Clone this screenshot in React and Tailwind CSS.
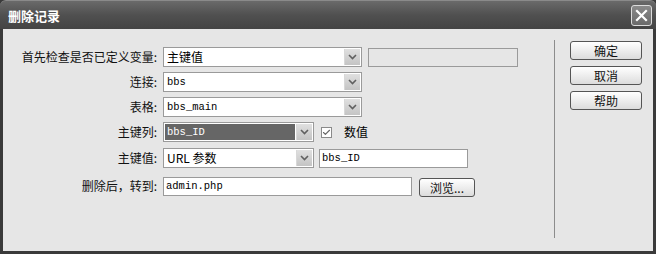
import { Check } from "lucide-react";

const cjk = { fontFamily: '"Noto Sans CJK SC", "Noto Sans", sans-serif' };
const mono = { fontFamily: '"Liberation Mono", "Noto Sans CJK SC", monospace' };

const Arrow = () => (
	<div className="absolute right-[1px] top-[1px] bottom-[1px] w-[16px] flex items-center justify-center bg-gradient-to-b from-[#e0e0e0] to-[#c4c4c4] border-l border-[#d8d8d8]">
		<svg width="9" height="6" viewBox="0 0 9 6">
			<path d="M1 1 L4.5 4.5 L8 1" fill="none" stroke="#606060" strokeWidth="1.6" />
		</svg>
	</div>
);

const Select = ({ value, width, selected, monoText }) => (
	<div
		className="relative h-[20px] border border-[#9a9a9a] bg-white flex items-center"
		style={{ width }}
	>
		<div
			className={
				"h-[16px] ml-[1px] pl-[2px] flex items-center text-[12px] leading-none " +
				(selected ? "bg-[#666666] text-white w-[130px]" : "text-black")
			}
			style={monoText ? { ...mono, fontSize: 10.5 } : cjk}
		>
			{value}
		</div>
		<Arrow />
	</div>
);

const Row = ({ label, children, className = "" }) => (
	<div className={"flex items-center " + className}>
		<div className="w-[157px] pr-[3px] text-right text-[12px] leading-none text-[#111]" style={cjk}>
			{label}
		</div>
		<div className="ml-[3px] flex items-center">{children}</div>
	</div>
);

const Button = ({ children, className = "" }) => (
	<div
		className={
			"h-[19px] flex items-center justify-center rounded-[3px] border border-[#555] bg-gradient-to-b from-white to-[#dcdcdc] text-[12px] leading-none text-[#111] " +
			className
		}
		style={cjk}
	>
		{children}
	</div>
);

export default function App() {
	return (
		<div className="w-[656px] h-[254px] bg-[#3a3a3a] flex flex-col overflow-hidden">
			<div className="h-[29px] shrink-0 rounded-t-[6px] bg-gradient-to-b from-[#6a6a6a] via-[#505050] to-[#444444] border-t border-[#8a8a8a] flex items-center justify-between pl-[8px] pr-[4px]">
				<div className="text-white font-bold text-[13px] leading-none" style={cjk}>
					删除记录
				</div>
				<div className="w-[21px] h-[21px] rounded-[3px] border border-[#dcdcdc] bg-gradient-to-b from-[#8a8a8a] to-[#6a6a6a] flex items-center justify-center">
					<svg width="13" height="13" viewBox="0 0 13 13">
						<path d="M2 2 L11 11 M11 2 L2 11" stroke="white" strokeWidth="2.2" strokeLinecap="square" />
					</svg>
				</div>
			</div>
			<div className="flex-1 mx-[3px] mb-[3px] bg-[#e6e6e6] flex">
				<div className="w-[551px] pt-[18px] flex flex-col">
					<Row label="首先检查是否已定义变量:">
						<Select value="主键值" width={199} />
						<div className="ml-[6px] w-[150px] h-[19px] border border-[#9a9a9a] bg-[#e6e6e6]" />
					</Row>
					<Row label="连接:" className="mt-[5px]">
						<Select value="bbs" width={199} monoText />
					</Row>
					<Row label="表格:" className="mt-[5px]">
						<Select value="bbs_main" width={199} monoText />
					</Row>
					<Row label="主键列:" className="mt-[5px]">
						<Select value="bbs_ID" width={151} monoText selected />
						<div className="ml-[7px] w-[11px] h-[11px] border border-[#8a8a8a] bg-white flex items-center justify-center">
							<Check size={9} strokeWidth={3} color="#666" />
						</div>
						<div className="ml-[12px] text-[12px] leading-none" style={cjk}>
							数值
						</div>
					</Row>
					<Row label="主键值:" className="mt-[6px]">
						<Select value="URL 参数" width={151} />
						<div
							className="ml-[5px] w-[149px] h-[19px] border border-[#9a9a9a] bg-white flex items-center pl-[2px] text-[10.5px] leading-none"
							style={mono}
						>
							bbs_ID
						</div>
					</Row>
					<Row label="删除后，转到:" className="mt-[7px]">
						<div
							className="w-[249px] h-[19px] border border-[#9a9a9a] bg-white flex items-center pl-[2px] text-[10.5px] leading-none"
							style={mono}
						>
							admin.php
						</div>
						<Button className="ml-[7px] w-[56px] mt-[3px]">浏览...</Button>
					</Row>
				</div>
				<div className="mt-[11px] mb-[13px] w-[1px] bg-[#8c8c8c]" />
				<div className="ml-[15px] pt-[12px] flex flex-col gap-[6px]">
					<Button className="w-[72px]">确定</Button>
					<Button className="w-[72px]">取消</Button>
					<Button className="w-[72px]">帮助</Button>
				</div>
			</div>
		</div>
	);
}
